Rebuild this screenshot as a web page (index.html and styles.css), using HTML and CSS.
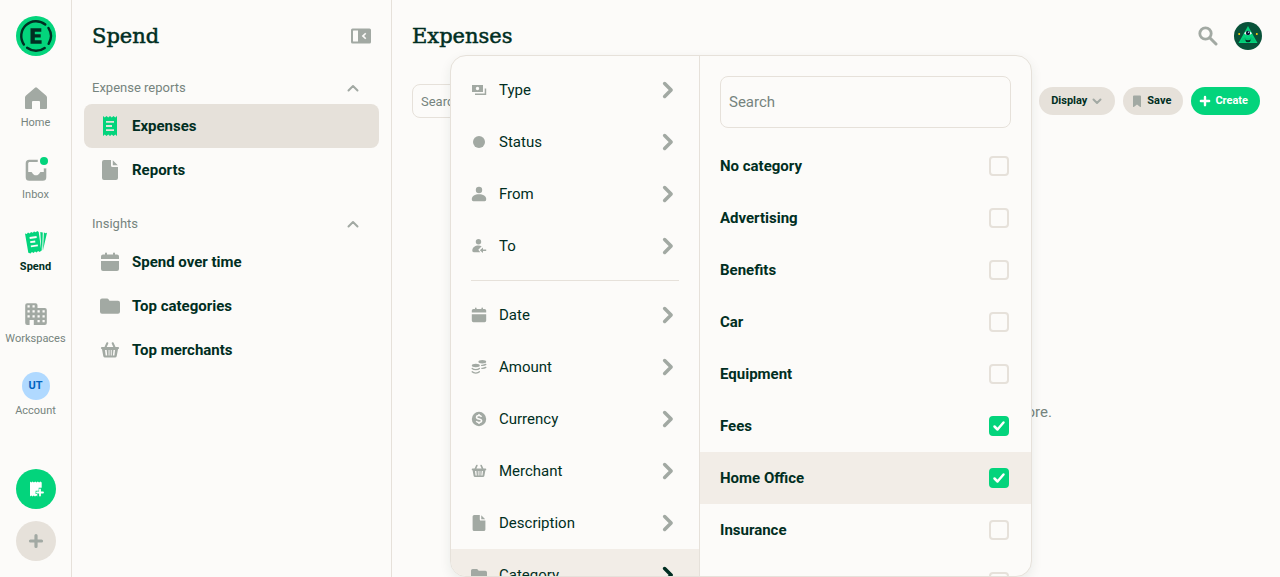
FILE: index.html
```html
<!DOCTYPE html>
<html lang="en">
    <head>
        <meta charset="utf-8">
        <meta name="viewport" content="width=device-width, initial-scale=1">
        <title>Expenses</title>
        <link rel="stylesheet" href="styles.css">
    </head>
    <body>
        <svg class="sprite" aria-hidden="true">
            <symbol id="home" viewBox="0 0 24 24">
                <path d="M11 1.800a1.500 1.500 0 0 1 2 0l9 7.600a3 3 0 0 1 1 2.200V22a1 1 0 0 1-1 1h-5.500a.5.5 0 0 1-.5-.5V16a1 1 0 0 0-1-1H9a1 1 0 0 0-1 1v6.500a.5.5 0 0 1-.5.5H2a1 1 0 0 1-1-1V11.600a3 3 0 0 1 1-2.200z"/>
            </symbol>
            <symbol id="inbox" viewBox="0 0 24 24">
                <path d="M13.800 1.700H5.200A3.500 3.500 0 0 0 1.700 5.200v14a3.500 3.500 0 0 0 3.500 3.500h13.600a3.500 3.500 0 0 0 3.500-3.500V10.300a6 6 0 0 1-2.500 0V14h-3a1 1 0 0 0-1 .7c-.6 1.500-2 2.600-3.800 2.600s-3.200-1.100-3.800-2.600a1 1 0 0 0-1-.7h-3V5.600c0-.9.600-1.500 1.500-1.500h8z"/>
            </symbol>
            <symbol id="receipt" viewBox="0 0 20 20">
                <path fill-rule="evenodd" d="M3 0l1.750 1.500L6.500 0l1.750 1.500L10 0l1.750 1.500L13.500 0l1.750 1.500L17 0v20l-1.750-1.500L13.500 20l-1.750-1.500L10 20l-1.750-1.500L6.500 20l-1.750-1.500L3 20zM6 5v1.800h8V5zm0 4.100v1.800h6V9.100zm0 4.100V15h8v-1.800z"/>
            </symbol>
            <symbol id="receipts" viewBox="0 0 24 24">
                <path fill-rule="evenodd" d="M1 3.500l1.800.6L4 2.600l1.800.8L7 2l1.800.8L10 1.500l1.800.8 1.400-1.200 1.500.8L17.300 20.500l-1.500 1.500-1.800-1-1.300 1.500-1.800-1-1.200 1.500-1.800-1L6.500 23.500l-2.200-.7zM5.500 7l.3 1.900 7-1-.3-1.900zm.6 4.200.3 1.900 5-.7-.3-1.900zm.6 4.200.3 1.900 7-1-.3-1.900z"/>
                <path d="M16.300 2l2.500.6-.6 17.500-.8.800zM19.900 2.300l1.200 1 1.900-.5-4 17.500z"/>
            </symbol>
            <symbol id="building" viewBox="0 0 24 24">
                <path fill-rule="evenodd" d="M3.200 1.300h8.300a2 2 0 0 1 2 2V6h7.300a2 2 0 0 1 2 2v13a2 2 0 0 1-2 2h-11v-5H5.600v5H3.200a2 2 0 0 1-2-2V3.300a2 2 0 0 1 2-2zm.3 1.900v2.200h2.200V3.200zm5 0v2.200h2.200V3.200zm-5 5v2.200h2.200V8.200zm5 0v2.200h2.200V8.200zm5 0v2.200h2.200V8.200zm5 0v2.200h2.200V8.200zm-15 5v2.200h2.200v-2.200zm5 0v2.200h2.200v-2.200zm5 0v2.200h2.200v-2.200zm5 0v2.200h2.200v-2.200zm-5 4.800v2.200h2.200V18zm5 0v2.200h2.200V18z"/>
            </symbol>
            <symbol id="doc" viewBox="0 0 20 20">
                <path d="M4 0h7v5.500A1.500 1.500 0 0 0 12.500 7H18v11a2 2 0 0 1-2 2H4a2 2 0 0 1-2-2V2a2 2 0 0 1 2-2zM12.800.3l5 5h-5z"/>
            </symbol>
            <symbol id="calendar" viewBox="0 0 20 20">
                <path d="M5 1.500a1 1 0 0 1 2 0V2.500h6v-1a1 1 0 0 1 2 0V2.500h2a2 2 0 0 1 2 2V7H1V4.500a2 2 0 0 1 2-2h2zM1 9h18v8a2 2 0 0 1-2 2H3a2 2 0 0 1-2-2z"/>
            </symbol>
            <symbol id="folder" viewBox="0 0 20 20">
                <path d="M0 4.500a2 2 0 0 1 2-2h5a2 2 0 0 1 1.700.9l.6 1a1 1 0 0 0 .8.400H18a2 2 0 0 1 2 2v9a2 2 0 0 1-2 2H2a2 2 0 0 1-2-2z"/>
            </symbol>
            <symbol id="basket" viewBox="0 0 20 20">
                <path fill-rule="evenodd" d="M6.500 2.600a1 1 0 0 1 1.800.8L6.700 7h6.600l-1.600-3.600a1 1 0 0 1 1.800-.8L15.500 7H18a1 1 0 0 1 0 2.200l-1.300 7a1.800 1.800 0 0 1-1.800 1.300H5.100a1.800 1.800 0 0 1-1.800-1.300L2 9.200A1 1 0 0 1 2 7h2.500zM5 10l.7 5.500h1.500L6.700 10zm3.600 0v5.500h.9V10zm2.200 0v5.500h.9V10zm2.700 0-.6 5.500h1.500L15 10z"/>
            </symbol>
            <symbol id="panel" viewBox="0 0 20 16">
                <path fill-rule="evenodd" d="M1.500.5h17A1.500 1.500 0 0 1 20 2v12a1.500 1.500 0 0 1-1.500 1.500h-17A1.500 1.500 0 0 1 0 14V2A1.500 1.500 0 0 1 1.500.5zM2.500 2.500a.5.5 0 0 0-.5.5v10a.5.5 0 0 0 .5.5H7v-11zM14.200 4.700 10.700 8l3.500 3.300 1.100-1.100L13.100 8l2.200-2.200z"/>
            </symbol>
            <symbol id="up" viewBox="0 0 12 12">
                <path class="line" stroke-width="2" d="M1.500 8.500 6 4l4.500 4.500"/>
            </symbol>
            <symbol id="down" viewBox="0 0 12 12">
                <path class="line" stroke-width="2" d="M2.500 4.500 6 8l3.500-3.500"/>
            </symbol>
            <symbol id="right" viewBox="0 0 16 16">
                <path class="line" stroke-width="2.800" d="M4.500 2.800 9.700 8l-5.200 5.200"/>
            </symbol>
            <symbol id="plus" viewBox="0 0 16 16">
                <path class="line" stroke-width="3.200" d="M8 2.500v11M2.500 8h11"/>
            </symbol>
            <symbol id="receipt-plus" viewBox="0 0 16 16">
                <path d="M2 .5l1.300 1 1.300-1 1.300 1 1.300-1 1.300 1 1.300-1 1.300 1 1.300-1 1.300 1V6.700h-3v3H7.600v3.200h1.700v2.600l-1-1-1.300 1-1.300-1-1.200 1-1.200-1-1.300 1z"/>
                <path class="line" stroke-width="1.800" d="M12 8.500v6M9 11.500h6"/>
            </symbol>
            <symbol id="search" viewBox="0 0 20 20">
                <path class="line" stroke-width="3" d="M12 12l6 6"/>
                <circle class="line" stroke-width="2.800" cx="7.500" cy="7.500" r="5.700"/>
            </symbol>
            <symbol id="bookmark" viewBox="0 0 12 12">
                <path d="M3 .5h6a1 1 0 0 1 1 1v10a.5.5 0 0 1-.8.400L6 9.500l-3.200 2.400a.5.5 0 0 1-.8-.4v-10a1 1 0 0 1 1-1z"/>
            </symbol>
            <symbol id="cash" viewBox="0 0 16 16">
                <path fill-rule="evenodd" d="M1 3h11v7H1zm5.500 1.800a1.700 1.700 0 1 0 0 3.400 1.700 1.700 0 0 0 0-3.400z"/>
                <path d="M13.700 6.500h1.500V13H4v-1.600h9.700z"/>
            </symbol>
            <symbol id="dot" viewBox="0 0 16 16">
                <circle cx="8" cy="8" r="6"/>
            </symbol>
            <symbol id="user" viewBox="0 0 16 16">
                <circle cx="8" cy="4" r="3.200"/>
                <path d="M.8 13.300C.8 10 4 8.300 8 8.300s7.200 1.700 7.200 5c0 1.200-.5 1.900-1.600 1.900H2.400C1.300 15.200.8 14.500.8 13.300z"/>
            </symbol>
            <symbol id="user-in" viewBox="0 0 16 16">
                <circle cx="7.500" cy="3.700" r="2.700"/>
                <path d="M1.300 12.500C1.300 9.500 4 7.500 7.500 7.500c1.200 0 2.300.2 3.200.7L7.300 11.700l2 2.500H2.800c-1 0-1.500-.7-1.500-1.700z"/>
                <path d="M12 9.500v2h3.200v1.600H12v2l-3.200-2.800z"/>
            </symbol>
            <symbol id="coins" viewBox="0 0 16 16">
                <ellipse cx="11.300" cy="2.700" rx="3.900" ry="1.700"/>
                <ellipse cx="4.800" cy="6.500" rx="4" ry="1.700"/>
                <path class="line" stroke-width="1.300" d="M1.200 9.500c1.500 1.400 5.700 1.400 7.200 0M1.200 12.800c1.500 1.700 5.700 1.700 7.200 0M10.600 6.300c1.500.1 3.200-.2 4.200-.9M10.800 9.300c1.500.1 3-.2 4-.9"/>
            </symbol>
            <symbol id="dollar" viewBox="0 0 16 16">
                <circle cx="8" cy="8" r="7.200"/>
                <path class="cut" d="M10.500 5.900C10 4.900 9.200 4.500 8 4.500c-1.500 0-2.500.6-2.500 1.700C5.500 8.800 10.600 7.200 10.600 9.800c0 1.100-1 1.700-2.600 1.700-1.300 0-2.200-.5-2.700-1.500M8 3v1.500M8 11.500V13"/>
            </symbol>
        </svg>

        <div class="app">
            <nav class="rail" aria-label="Main">
                <svg class="logo" viewBox="0 0 40 40" aria-hidden="true">
                    <circle cx="20" cy="20" r="20" fill="#03d47c"/>
                    <path class="logo-ring" d="M7.900 28.500A14.800 14.800 0 0 1 29.300 8.500M32.400 11.900A14.800 14.800 0 0 1 32.600 27.800M28.700 32A14.800 14.800 0 0 1 11.100 31.800"/>
                    <path fill="#002e22" d="M14.500 12.300h10.800v3.500h-6.500v2.500h5.900v3.300h-5.900v2.700h6.800v3.500H14.500z"/>
                </svg>
                <div class="tabs">
                    <a class="tab" href="#home"><svg><use href="#home"/></svg>Home</a>
                    <a class="tab" href="#inbox"><span class="tab-icon"><svg><use href="#inbox"/></svg><i class="badge"></i></span>Inbox</a>
                    <a class="tab active" href="#spend"><svg><use href="#receipts"/></svg>Spend</a>
                    <a class="tab" href="#workspaces"><svg><use href="#building"/></svg>Workspaces</a>
                    <a class="tab" href="#account"><span class="initials">UT</span>Account</a>
                </div>
                <div class="actions">
                    <button class="round green" aria-label="New expense"><svg><use href="#receipt-plus"/></svg></button>
                    <button class="round" aria-label="Create"><svg><use href="#plus"/></svg></button>
                </div>
            </nav>

            <aside class="side">
                <header class="top">
                    <h2 class="title">Spend</h2>
                    <button class="icon-button" aria-label="Collapse"><svg class="panel-icon"><use href="#panel"/></svg></button>
                </header>
                <section class="group">
                    <button class="group-head">Expense reports<svg><use href="#up"/></svg></button>
                    <a class="item selected" href="#expenses"><svg><use href="#receipt"/></svg>Expenses</a>
                    <a class="item" href="#reports"><svg><use href="#doc"/></svg>Reports</a>
                </section>
                <section class="group">
                    <button class="group-head">Insights<svg><use href="#up"/></svg></button>
                    <a class="item" href="#time"><svg><use href="#calendar"/></svg>Spend over time</a>
                    <a class="item" href="#categories"><svg><use href="#folder"/></svg>Top categories</a>
                    <a class="item" href="#merchants"><svg><use href="#basket"/></svg>Top merchants</a>
                </section>
            </aside>

            <main class="main">
                <header class="top">
                    <h1 class="title">Expenses</h1>
                    <div class="top-tools">
                        <button class="icon-button" aria-label="Find"><svg class="search-icon"><use href="#search"/></svg></button>
                        <svg class="avatar" viewBox="0 0 28 28" aria-hidden="true">
                            <circle cx="14" cy="14" r="14" fill="#085239"/>
                            <path d="M14 4 23.500 21h-19z" fill="#03d47c"/>
                            <path d="M8 17h12M6.500 19h15M11 15v2M17 15v2" stroke="#00a862" stroke-width=".6"/>
                            <path d="M10 11.200Q14 7 18 11.200 14 15.500 10 11.200z" fill="#fff"/>
                            <circle cx="14" cy="11" r="2.200" fill="#0b1b34"/>
                            <circle cx="14.600" cy="10.300" r=".7" fill="#b0d9ff"/>
                            <path d="M11 17.500q3 1.500 6 0-.5 2.700-3 2.700t-3-2.700z" fill="#002e22"/>
                            <circle cx="5.200" cy="12" r="1" fill="#fed607"/>
                            <circle cx="22.800" cy="12" r="1" fill="#fed607"/>
                        </svg>
                    </div>
                </header>
                <div class="toolbar">
                    <input class="find" type="text" placeholder="Search for something" aria-label="Search expenses">
                    <div class="buttons">
                        <button class="pill">Display<svg><use href="#down"/></svg></button>
                        <button class="pill with-icon"><svg><use href="#bookmark"/></svg>Save</button>
                        <button class="pill with-icon green"><svg><use href="#plus"/></svg>Create</button>
                    </div>
                </div>
                <p class="empty">Create an expense or take a test drive of Expensify to learn more.</p>

                <div class="popup">
                    <div class="filters">
                        <button class="filter"><svg><use href="#cash"/></svg>Type<svg class="arrow"><use href="#right"/></svg></button>
                        <button class="filter"><svg><use href="#dot"/></svg>Status<svg class="arrow"><use href="#right"/></svg></button>
                        <button class="filter"><svg><use href="#user"/></svg>From<svg class="arrow"><use href="#right"/></svg></button>
                        <button class="filter"><svg><use href="#user-in"/></svg>To<svg class="arrow"><use href="#right"/></svg></button>
                        <hr class="divider">
                        <button class="filter"><svg><use href="#calendar"/></svg>Date<svg class="arrow"><use href="#right"/></svg></button>
                        <button class="filter"><svg><use href="#coins"/></svg>Amount<svg class="arrow"><use href="#right"/></svg></button>
                        <button class="filter"><svg><use href="#dollar"/></svg>Currency<svg class="arrow"><use href="#right"/></svg></button>
                        <button class="filter"><svg><use href="#basket"/></svg>Merchant<svg class="arrow"><use href="#right"/></svg></button>
                        <button class="filter"><svg><use href="#doc"/></svg>Description<svg class="arrow"><use href="#right"/></svg></button>
                        <button class="filter open"><svg><use href="#folder"/></svg>Category<svg class="arrow"><use href="#right"/></svg></button>
                    </div>
                    <div class="options">
                        <input class="option-search" type="text" placeholder="Search" aria-label="Search categories">
                        <label class="option">No category<input type="checkbox"></label>
                        <label class="option">Advertising<input type="checkbox"></label>
                        <label class="option">Benefits<input type="checkbox"></label>
                        <label class="option">Car<input type="checkbox"></label>
                        <label class="option">Equipment<input type="checkbox"></label>
                        <label class="option">Fees<input type="checkbox" checked></label>
                        <label class="option hover">Home Office<input type="checkbox" checked></label>
                        <label class="option">Insurance<input type="checkbox"></label>
                        <label class="option"><input type="checkbox" aria-label="Next category"></label>
                    </div>
                </div>
            </main>
        </div>
    </body>
</html>
```

FILE: styles.css
```css
*{
    box-sizing: border-box;
}

body{
    margin: 0;
    font-family: Roboto, "Liberation Sans", sans-serif;
    font-size: 15px;
    line-height: 20px;
    color: #002e22;
    background-color: #fcfbf9;
}

a{
    color: inherit;
    text-decoration: none;
}

button, input{
    font: inherit;
    color: inherit;
    margin: 0;
}

button{
    padding: 0;
    border: 0;
    background: none;
    cursor: pointer;
}

svg{
    display: block;
    flex: none;
    fill: #a2a9a3;
    stroke: #a2a9a3;
    stroke-width: 0;
}

.sprite{
    display: none;
}

.line{
    fill: none;
    stroke-linecap: round;
    stroke-linejoin: round;
}

.cut{
    fill: none;
    stroke: #fcfbf9;
    stroke-width: 1.5;
}

.app{
    display: flex;
    height: 100vh;
    overflow: hidden;
}

/* left rail */
.rail{
    display: flex;
    flex-direction: column;
    align-items: center;
    flex: none;
    width: 72px;
    padding: 16px 0;
    border-right: 1px solid #e6e1da;
}

.logo{
    width: 40px;
    height: 40px;
}

.logo-ring{
    fill: none;
    stroke: #002e22;
    stroke-width: 2.4;
    stroke-linecap: round;
}

.tabs{
    width: 100%;
    margin-top: 16px;
}

.tab{
    display: flex;
    flex-direction: column;
    align-items: center;
    height: 72px;
    padding-top: 14px;
    font-size: 11px;
    line-height: 26px;
    color: #76847e;
}

.tab svg{
    width: 24px;
    height: 24px;
}

.tab.active{
    font-weight: bold;
    color: #002e22;
}

.tab.active svg, .item.selected svg{
    fill: #03d47c;
}

.tab-icon{
    position: relative;
}

.badge{
    position: absolute;
    top: -1px;
    right: 0;
    width: 8px;
    height: 8px;
    border-radius: 50%;
    background-color: #03d47c;
}

.initials{
    width: 28px;
    height: 28px;
    margin: -2px 0;
    border-radius: 50%;
    background-color: #b0d9ff;
    line-height: 28px;
    text-align: center;
    font-weight: bold;
    color: #0164bf;
}

.actions{
    display: flex;
    flex-direction: column;
    gap: 12px;
    margin-top: auto;
}

.round{
    display: flex;
    align-items: center;
    justify-content: center;
    width: 40px;
    height: 40px;
    border-radius: 50%;
    background-color: #e6e1da;
}

.round svg{
    width: 16px;
    height: 16px;
}

.green{
    background-color: #03d47c;
    color: #fff;
}

.green svg{
    fill: #fff;
    stroke: #fff;
}

/* section panel */
.side{
    flex: none;
    width: 320px;
    border-right: 1px solid #e6e1da;
}

.top{
    display: flex;
    align-items: center;
    justify-content: space-between;
    height: 72px;
    padding: 0 20px;
}

.title{
    margin: 0;
    font-family: "DejaVu Serif", serif;
    font-size: 21px;
    font-weight: normal;
    line-height: 28px;
    -webkit-text-stroke: 0.5px #002e22;
}

.panel-icon{
    width: 20px;
    height: 16px;
}

.group{
    padding: 0 12px;
    margin-bottom: 16px;
}

.group-head{
    display: flex;
    align-items: center;
    justify-content: space-between;
    width: 100%;
    height: 32px;
    padding: 0 20px 0 8px;
    font-size: 13px;
    color: #76847e;
}

.group-head svg, .pill svg{
    width: 12px;
    height: 12px;
}

.item{
    display: flex;
    align-items: center;
    gap: 12px;
    height: 44px;
    padding: 0 16px;
    border-radius: 8px;
    font-weight: bold;
}

.item.selected{
    background-color: #e6e1da;
}

.item svg{
    width: 20px;
    height: 20px;
}

/* main column */
.main{
    position: relative;
    flex: 1;
    min-width: 0;
}

.top-tools{
    display: flex;
    align-items: center;
    gap: 16px;
    margin-right: -2px;
}

.search-icon{
    width: 20px;
    height: 20px;
}

.avatar{
    width: 28px;
    height: 28px;
}

.toolbar{
    display: flex;
    align-items: center;
    justify-content: space-between;
    padding: 12px 20px;
}

.find{
    width: 200px;
    height: 34px;
    padding: 0 8px;
    border: 1px solid #e6e1da;
    border-radius: 8px;
    background: none;
    font-size: 13px;
}

::placeholder{
    color: #76847e;
    opacity: 1;
}

.buttons{
    display: flex;
    gap: 8px;
}

.pill{
    display: flex;
    align-items: center;
    gap: 4px;
    height: 28px;
    padding: 0 12px;
    border-radius: 14px;
    background-color: #e6e1da;
    font-size: 11px;
    font-weight: bold;
}

.pill.with-icon{
    padding-left: 8px;
}

.pill.green{
    background-color: #03d47c;
}

.empty{
    margin: 0;
    padding: 272px 20px 0;
    text-align: center;
    color: #76847e;
}

/* filter popup */
.popup{
    position: absolute;
    top: 55px;
    bottom: 0;
    left: 58px;
    display: flex;
    width: 582px;
    overflow: hidden;
    border: 1px solid #e6e1da;
    border-radius: 16px;
    background-color: #fcfbf9;
    box-shadow: 0 4px 12px rgba(0, 46, 34, 0.08);
}

.filters{
    flex: none;
    width: 249px;
    padding-top: 8px;
    border-right: 1px solid #e6e1da;
}

.filter{
    display: flex;
    align-items: center;
    gap: 12px;
    width: 100%;
    height: 52px;
    padding: 0 20px;
}

.filter svg{
    width: 16px;
    height: 16px;
}

.filter .arrow{
    width: 20px;
    height: 20px;
    margin-left: auto;
}

.filter.open, .option.hover{
    background-color: #f2ede7;
}

.filter.open .arrow{
    stroke: #002e22;
}

.divider{
    height: 1px;
    margin: 8px 20px;
    border: 0;
    background-color: #e6e1da;
}

.options{
    flex: 1;
    padding-top: 20px;
}

.option-search{
    display: block;
    width: calc(100% - 40px);
    height: 52px;
    margin: 0 20px 12px;
    padding: 0 8px;
    border: 1px solid #e6e1da;
    border-radius: 8px;
    background: none;
}

.option{
    display: flex;
    align-items: center;
    height: 52px;
    padding: 0 22px 0 20px;
    font-weight: bold;
}

.option input{
    appearance: none;
    width: 20px;
    height: 20px;
    margin-left: auto;
    border: 2px solid #e6e1da;
    border-radius: 4px;
}

.option input:checked{
    border-color: #03d47c;
    background: #03d47c url("data:image/svg+xml,%3Csvg xmlns='http://www.w3.org/2000/svg' viewBox='0 0 16 16'%3E%3Cpath d='M3.500 8.500l3 3 6-7' fill='none' stroke='white' stroke-width='2.500' stroke-linecap='round' stroke-linejoin='round'/%3E%3C/svg%3E") center / 16px 16px no-repeat;
}
```
